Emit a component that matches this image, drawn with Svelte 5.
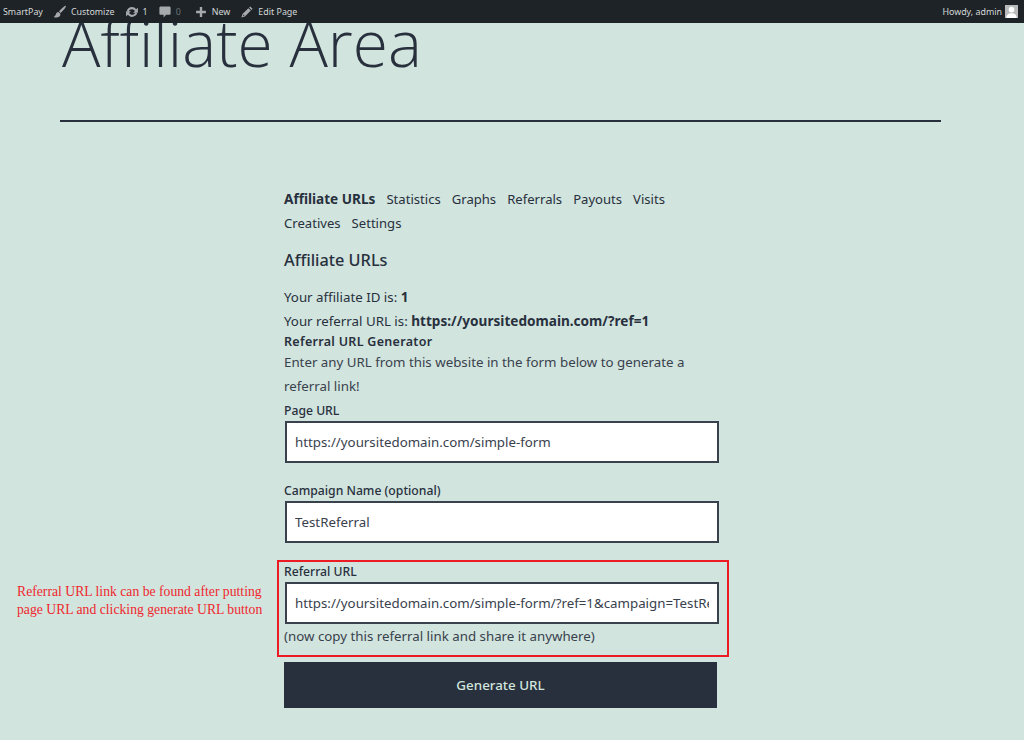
<script>
	const tabs = ['Statistics', 'Graphs', 'Referrals', 'Payouts', 'Visits', 'Creatives', 'Settings'];
</script>

<div class="bar">
	<div class="bar-left">
		<span class="item">SmartPay</span>
		<span class="item">
			<svg viewBox="0 0 20 20" width="14" height="14"><path d="M18.300 1c-1-.6-4.300 2.400-7.300 5.500L8.600 9.200l2.200 2.200 2.800-2.800c3-3 5.600-6.700 4.700-7.600zM7.800 10c-1.800 0-3.200 1.200-3.500 3-.3 1.700-1.500 3-3.300 4 2.200 1.300 5.700 1.400 7.700-.1 1.400-1 2.100-2.600 1.800-4.400z" /></svg>
			<span>Customize</span>
		</span>
		<span class="item">
			<svg viewBox="0 0 20 20" width="14" height="14"><path d="M10 3c2.400 0 4.500 1.200 5.800 3L18.500 4v7h-7l2.600-2.500C13.200 7 11.700 6 10 6 7.900 6 6.200 7.300 5.400 9.100L2.500 8.200C3.600 5.200 6.500 3 10 3zM10 17c-2.400 0-4.500-1.200-5.800-3l-2.700 2V9h7l-2.600 2.500C6.800 13 8.300 14 10 14c2.100 0 3.800-1.300 4.600-3.100l2.900.9C16.400 14.800 13.500 17 10 17z" /></svg>
			<span>1</span>
		</span>
		<span class="item muted">
			<svg viewBox="0 0 20 20" width="14" height="14"><path d="M4 2h12c1.300 0 2 .8 2 2v8c0 1.200-.7 2-2 2h-4.500L8 18v-4H4c-1.300 0-2-.8-2-2V4c0-1.200.7-2 2-2z" /></svg>
			<span>0</span>
		</span>
		<span class="item">
			<svg viewBox="0 0 20 20" width="14" height="14"><path d="M8.300 3h3.400v5.300H17v3.400h-5.300V17H8.300v-5.300H3V8.300h5.300z" /></svg>
			<span>New</span>
		</span>
		<span class="item">
			<svg viewBox="0 0 20 20" width="14" height="14"><path fill-rule="evenodd" d="M14.500 2l3.500 3.500-1.500 1.500L13 3.500zM12 4.500L15.500 8l-8.500 8.500-5 1.500 1.500-5zM5 13.500l-.9 2.400 2.400-.9z" /></svg>
			<span>Edit Page</span>
		</span>
	</div>
	<div class="howdy">
		<span>Howdy, admin</span>
		<span class="avatar">
			<svg viewBox="0 0 14 14" width="13" height="13"><circle cx="7" cy="5" r="3" /><path d="M1.500 14c0-3.500 2.500-5 5.500-5s5.500 1.500 5.500 5z" /></svg>
		</span>
	</div>
</div>

<div class="page">
	<header class="title-wrap">
		<h1>Affiliate Area</h1>
	</header>

	<main class="content">
		<nav class="tabs">
			<a href="#urls" class="active">Affiliate URLs</a>
			{#each tabs as tab}
				<a href="#{tab.toLowerCase()}">{tab}</a>
			{/each}
		</nav>

		<h2>Affiliate URLs</h2>

		<p class="id-line">Your affiliate ID is: <strong>1</strong></p>
		<p class="url-line">Your referral URL is: <strong>https://yoursitedomain.com/?ref=1</strong></p>

		<h3>Referral URL Generator</h3>
		<p class="intro">Enter any URL from this website in the form below to generate a referral link!</p>

		<div class="field">
			<label for="page-url">Page URL</label>
			<input id="page-url" type="text" value="https://yoursitedomain.com/simple-form" />
		</div>
		<div class="field">
			<label for="campaign">Campaign Name (optional)</label>
			<input id="campaign" type="text" value="TestReferral" />
		</div>
		<div class="field last">
			<label for="ref-url">Referral URL</label>
			<input id="ref-url" type="text" value="https://yoursitedomain.com/simple-form/?ref=1&campaign=TestReferral" />
			<p class="hint">(now copy this referral link and share it anywhere)</p>
			<div class="red-box"></div>
			<p class="note">Referral URL link can be found after putting<br />page URL and clicking generate URL button</p>
		</div>

		<button type="button">Generate URL</button>
	</main>
</div>

<style>
	:global(body) {
		background: #d1e4dd;
		font-family: "Noto Sans", "Open Sans", sans-serif;
		color: #28303d;
		overflow: hidden;
	}
	.bar {
		position: relative;
		z-index: 2;
		height: 23px;
		background: #1d2327;
		color: #d5d7d8;
		font-size: 8.9px;
		display: flex;
		align-items: center;
		justify-content: space-between;
		padding: 0 6px 0 3px;
	}
	.bar-left {
		display: flex;
		align-items: center;
		gap: 10px;
	}
	.item {
		display: flex;
		align-items: center;
		gap: 4px;
	}
	.item svg {
		fill: #a7aaad;
	}
	.item.muted {
		color: #6f7477;
		margin-right: 3px;
	}
	.howdy {
		display: flex;
		align-items: center;
		gap: 3px;
	}
	.avatar {
		width: 13px;
		height: 13px;
		background: #b9babb;
		display: flex;
	}
	.avatar svg {
		fill: #fff;
	}
	.page {
		height: 717px;
		overflow: hidden;
	}
	.title-wrap {
		display: flow-root;
		margin: 0 83px 0 60px;
		height: 97px;
		border-bottom: 2px solid #28303d;
	}
	h1 {
		margin: -16px 0 0 2px;
		font-family: "Open Sans", sans-serif;
		font-size: 64px;
		font-weight: 300;
		line-height: 72px;
	}
	.content {
		width: 436px;
		margin: 65px 0 0 284px;
		font-size: 13.3px;
		line-height: 24px;
	}
	strong {
		font-size: 13.6px;
	}
	.tabs {
		display: flex;
		flex-wrap: wrap;
		column-gap: 11px;
		width: 420px;
		font-size: 13.1px;
	}
	.tabs a {
		color: #28303d;
		text-decoration: none;
	}
	.tabs .active {
		font-size: 13.6px;
		font-weight: 700;
	}
	h2 {
		margin: 13px 0 0;
		font-size: 16.3px;
		font-weight: 500;
		line-height: 24px;
	}
	.id-line {
		margin: 13px 0 0;
	}
	.url-line {
		margin: 0;
	}
	h3 {
		margin: 1px 0 0;
		font-size: 12.5px;
		font-weight: 600;
		line-height: 16px;
		letter-spacing: 0.3px;
	}
	.intro {
		margin: 0 0 4.5px;
		width: 410px;
		color: #39414d;
	}
	.field {
		margin-bottom: 20.5px;
	}
	.field.last {
		position: relative;
		margin-bottom: 0;
	}
	label {
		display: block;
		font-size: 12.2px;
		font-weight: 500;
		line-height: 16px;
		margin-top: 3px;
		margin-bottom: 2px;
	}
	input {
		display: block;
		box-sizing: border-box;
		width: 434px;
		height: 42px;
		margin-left: 1px;
		padding: 0 8px;
		background: #fff;
		border: 2px solid #39414d;
		border-radius: 0;
		font: inherit;
		color: #39414d;
	}
	.hint {
		margin: 0;
		color: #39414d;
		line-height: 24px;
	}
	.red-box {
		position: absolute;
		left: -7px;
		top: -4px;
		width: 448px;
		height: 93px;
		border: 2px solid #ed1c24;
		pointer-events: none;
	}
	.note {
		position: absolute;
		left: -267px;
		top: 19px;
		margin: 0;
		white-space: nowrap;
		font-family: "Liberation Serif", serif;
		font-size: 13.7px;
		line-height: 18px;
		color: #f0262e;
	}
	button {
		display: block;
		width: 433px;
		height: 46px;
		margin-top: 14px;
		background: #28303d;
		color: #d1e4dd;
		border: none;
		font: inherit;
		font-weight: 500;
		font-size: 13.4px;
	}
</style>
